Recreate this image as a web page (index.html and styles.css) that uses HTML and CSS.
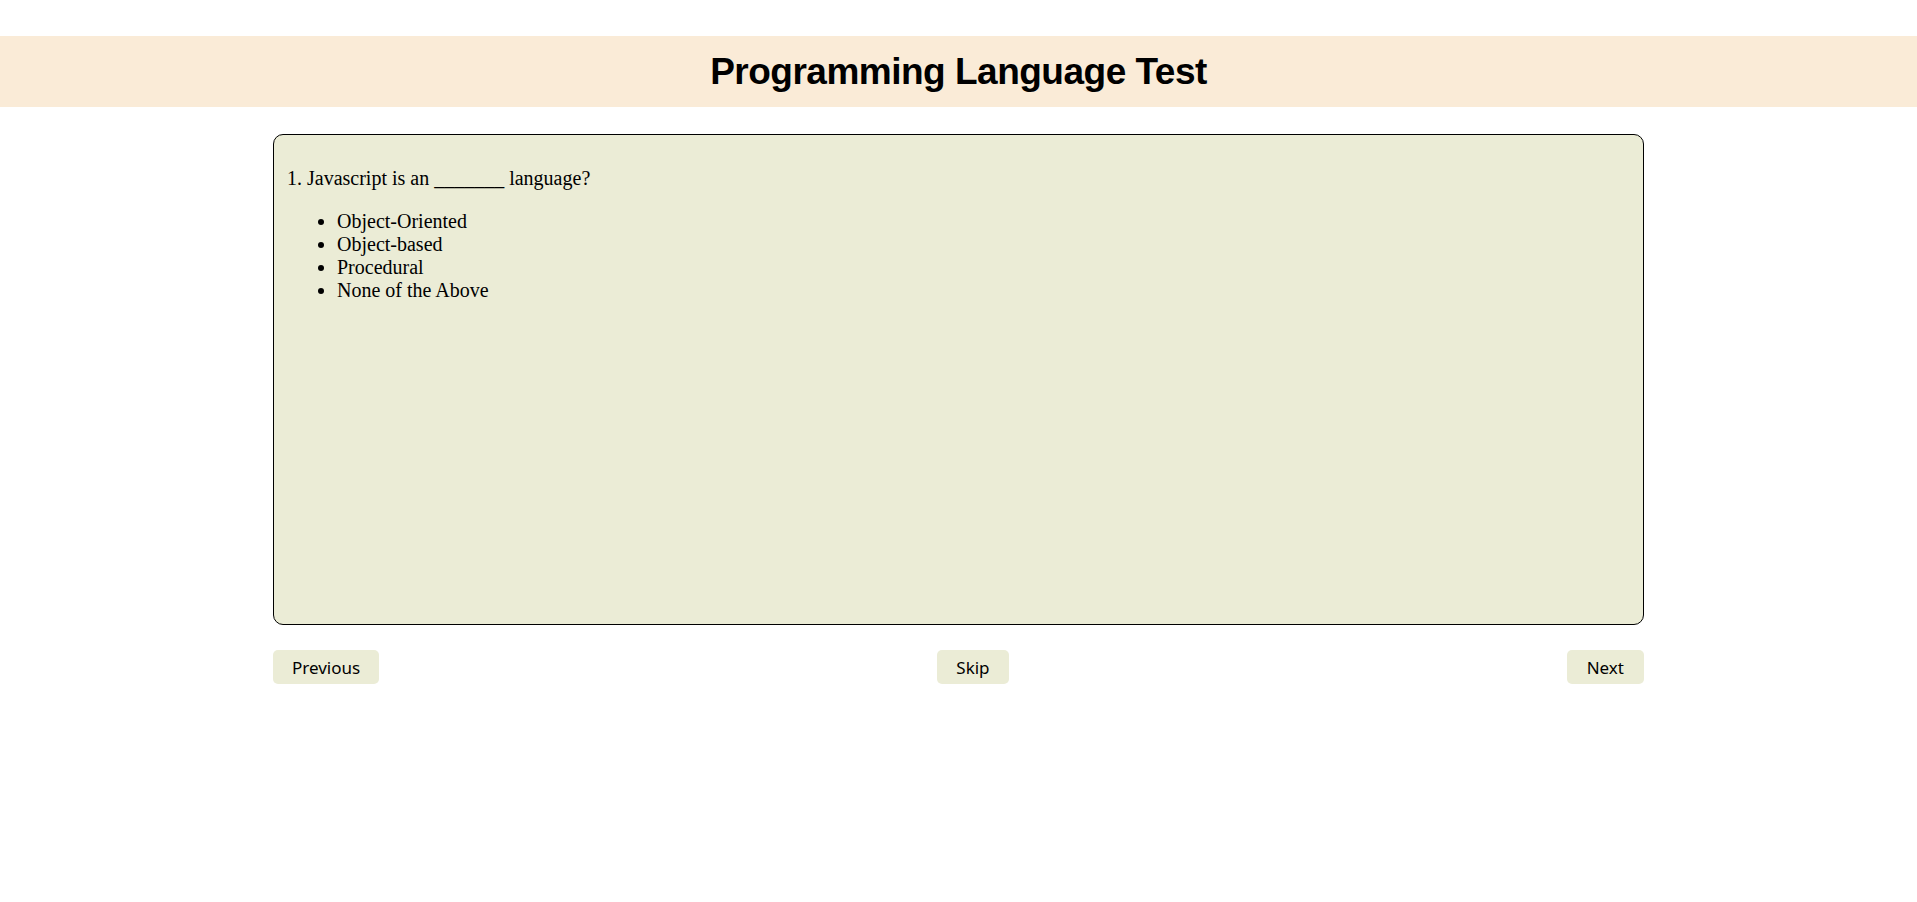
FILE: index.html
```html
<!DOCTYPE html>
<html>
<head>
<meta charset="utf-8">
<title>Programming Language Test</title>
<link rel="stylesheet" href="styles.css">
</head>
<body>
<h1 class="title">Programming Language Test</h1>
<main class="quiz">
  <section class="card">
    <p class="question">1. Javascript is an _______ language?</p>
    <ul class="options">
      <li>Object-Oriented</li>
      <li>Object-based</li>
      <li>Procedural</li>
      <li>None of the Above</li>
    </ul>
  </section>
  <nav class="controls">
    <button class="btn">Previous</button>
    <button class="btn">Skip</button>
    <button class="btn btn-next">Next</button>
  </nav>
</main>
</body>
</html>
```

FILE: styles.css
```css
html, body {
  margin: 0;
  padding: 0;
  background: #ffffff;
}
body {
  padding-top: 36px;
  font-family: "Liberation Serif", "Times New Roman", serif;
  font-size: 20px;
  color: #000;
}
.title {
  margin: 0;
  height: 71px;
  display: flex;
  align-items: center;
  justify-content: center;
  background: #faebd7;
  font-family: "Liberation Sans", Arial, sans-serif;
  font-weight: 700;
  font-size: 37px;
  letter-spacing: -0.5px;
  line-height: 1;
}
.quiz {
  width: 1371px;
  margin: 27px auto 0;
}
.card {
  box-sizing: border-box;
  height: 491px;
  border: 1px solid #000;
  border-radius: 10px;
  background: #ebecd6;
  padding: 12px 13px;
}
.question {
  margin: 20px 0 0;
  line-height: 23px;
}
.options {
  margin: 20px 0 0;
  padding-left: 50px;
  line-height: 23px;
}
.controls {
  margin-top: 25px;
  display: flex;
  justify-content: space-between;
}
.btn {
  height: 34px;
  border: none;
  border-radius: 5px;
  background: #ebecd6;
  font-family: "Noto Sans", "Open Sans", sans-serif;
  font-size: 17px;
  color: #000;
  padding: 0 19px;
}
.btn-next {
  padding: 0 20px;
}
```
